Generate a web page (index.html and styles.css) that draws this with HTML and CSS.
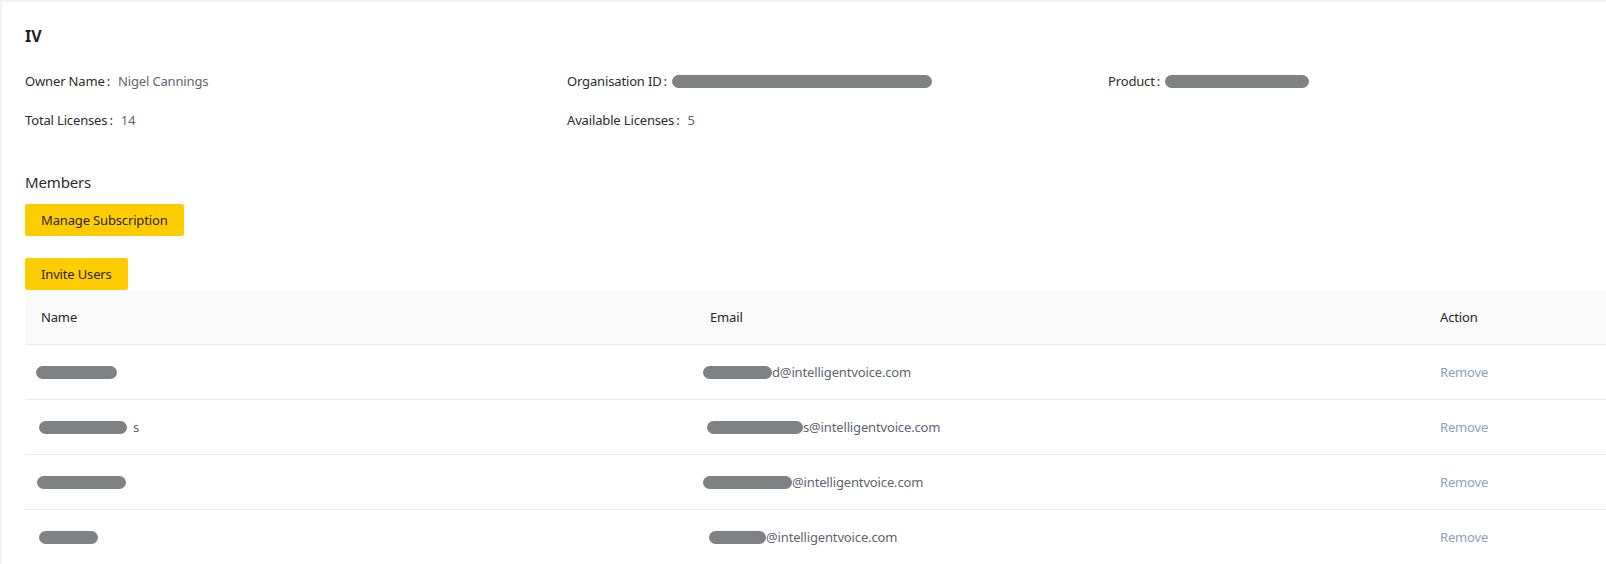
FILE: index.html
```html
<!DOCTYPE html>
<html lang="en">
<head>
<meta charset="utf-8">
<title>IV - Subscription</title>
<link rel="stylesheet" href="styles.css">
</head>
<body>
<div class="card">
  <h1 class="org-title">IV</h1>
  <div class="details">
    <div class="item"><span class="label">Owner Name</span><span class="value">Nigel Cannings</span></div>
    <div class="item"><span class="label">Organisation ID</span><span class="pill pill-org"></span></div>
    <div class="item"><span class="label">Product</span><span class="pill pill-product"></span></div>
    <div class="item"><span class="label">Total Licenses</span><span class="value">14</span></div>
    <div class="item"><span class="label">Available Licenses</span><span class="value">5</span></div>
  </div>
  <h2 class="section-title">Members</h2>
  <div class="actions">
    <button class="btn">Manage Subscription</button>
    <button class="btn">Invite Users</button>
  </div>
  <div class="table">
    <div class="row head">
      <div class="cell">Name</div>
      <div class="cell">Email</div>
      <div class="cell">Action</div>
    </div>
    <div class="row">
      <div class="cell name"><span class="pill" style="width:81px;margin-left:-5px"></span></div>
      <div class="cell email"><span class="pill" style="width:69px;margin-left:-7px"></span><span class="rest">d@intelligentvoice.com</span></div>
      <div class="cell"><a class="link">Remove</a></div>
    </div>
    <div class="row">
      <div class="cell name"><span class="pill" style="width:88px;margin-left:-2px"></span><span class="rest gap">s</span></div>
      <div class="cell email"><span class="pill" style="width:96px;margin-left:-3px"></span><span class="rest">s@intelligentvoice.com</span></div>
      <div class="cell"><a class="link">Remove</a></div>
    </div>
    <div class="row">
      <div class="cell name"><span class="pill" style="width:89px;margin-left:-4px"></span></div>
      <div class="cell email"><span class="pill" style="width:89px;margin-left:-7px"></span><span class="rest">@intelligentvoice.com</span></div>
      <div class="cell"><a class="link">Remove</a></div>
    </div>
    <div class="row">
      <div class="cell name"><span class="pill" style="width:59px;margin-left:-2px"></span></div>
      <div class="cell email"><span class="pill" style="width:57px;margin-left:-1px"></span><span class="rest">@intelligentvoice.com</span></div>
      <div class="cell"><a class="link">Remove</a></div>
    </div>
  </div>
</div>
</body>
</html>
```
FILE: styles.css
```css
* { box-sizing: border-box; }
html, body { margin: 0; padding: 0; }
body {
  background: #f0f1f5;
  font-family: "Noto Sans", "Open Sans", sans-serif;
  font-size: 13px;
  letter-spacing: -0.15px;
  color: #262626;
  overflow: hidden;
}
.card {
  margin: 2px 0 0 2px;
  background: #fff;
  padding: 22px 0 0 23px;
  min-height: 562px;
}
.org-title {
  margin: 0;
  font-size: 16px;
  line-height: 24px;
  font-weight: 700;
  letter-spacing: 0;
  color: #1f1f1f;
}
.details {
  display: grid;
  grid-template-columns: 542px 541px 1fr;
  row-gap: 19px;
  margin-top: 23px;
}
.item {
  display: flex;
  align-items: center;
  line-height: 20px;
}
.label { color: #2b2b2b; }
.label::after { content: ":"; margin: 0 8px 0 2px; }
.value { color: #5d6470; }
.pill {
  display: inline-block;
  height: 13px;
  border-radius: 7px;
  background: #808185;
  vertical-align: middle;
}
.pill-org { width: 260px; margin-left: -3px; }
.pill-product { width: 144px; margin-left: -3px; }
.section-title {
  margin: 40px 0 0;
  font-size: 15px;
  line-height: 24px;
  font-weight: 400;
  color: #2b2b2b;
}
.actions {
  display: flex;
  flex-direction: column;
  align-items: flex-start;
  gap: 22px;
  margin-top: 10px;
}
.btn {
  height: 32px;
  padding: 0 16px;
  border: 0;
  border-radius: 2px;
  background: #ffcc00;
  color: #262626;
  font-family: inherit;
  font-size: 13px;
  letter-spacing: -0.15px;
}
.table { width: 100%; }
.row {
  display: grid;
  grid-template-columns: 669px 730px 1fr;
  height: 55px;
  border-bottom: 1px solid #ebebeb;
}
.row.head { background: #fafafa; }
.cell {
  display: flex;
  align-items: center;
  padding: 0 16px;
  white-space: nowrap;
}
.email, .name { color: #5d6470; }
.rest { color: #5d6470; }
.rest.gap { margin-left: 6px; }
.link { color: #8da2bd; cursor: pointer; }
```
